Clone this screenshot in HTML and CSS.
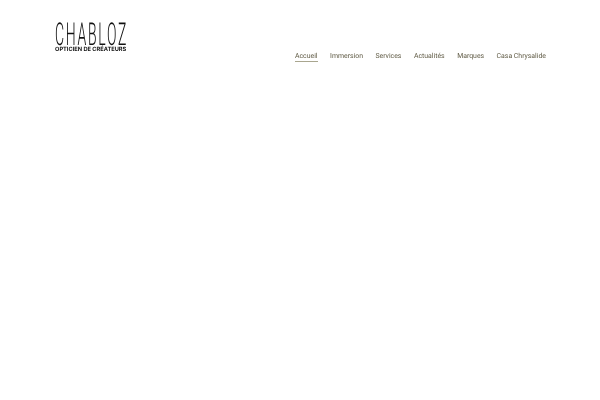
FILE: index.html
```html
<!DOCTYPE html>
<html lang="fr">
<head>
<meta charset="utf-8">
<title>Chabloz</title>
<link rel="stylesheet" href="styles.css">
</head>
<body>
<header class="site-header">
  <a class="logo" href="#">
    <span class="logo-name">CHABLOZ</span>
    <span class="logo-tag">OPTICIEN DE CRÉATEURS</span>
  </a>
  <nav class="main-nav">
    <a class="nav-link active" href="#">Accueil</a>
    <a class="nav-link" href="#">Immersion</a>
    <a class="nav-link" href="#">Services</a>
    <a class="nav-link" href="#">Actualités</a>
    <a class="nav-link" href="#">Marques</a>
    <a class="nav-link" href="#">Casa Chrysalide</a>
  </nav>
</header>
</body>
</html>
```
FILE: styles.css
```css
html, body {
  margin: 0;
  padding: 0;
  background: #fff;
  height: 100%;
  overflow: hidden;
}
.site-header {
  display: flex;
  justify-content: space-between;
  align-items: flex-start;
  padding: 25px 54px 0 55px;
  text-rendering: geometricPrecision;
}
a {
  text-decoration: none;
}
.logo {
  display: flex;
  flex-direction: column;
  width: 73px;
  color: #111;
  filter: blur(0.2px);
}
.logo-name {
  display: block;
  height: 10px;
  margin: 0 0 11.5px;
  font: 300 14px/10px "Roboto", sans-serif;
  letter-spacing: 1.7px;
  white-space: nowrap;
  transform: scale(1, 2.25);
  transform-origin: 0 0;
}
.logo-tag {
  display: block;
  font: 700 5.7px/6px "Inter", sans-serif;
  white-space: nowrap;
}
.main-nav {
  display: flex;
  gap: 12.5px;
  margin-top: 26px;
  filter: blur(0.2px);
}
.nav-link {
  font: 400 6.9px/10px "Roboto", sans-serif;
  color: #5f5a44;
  border-bottom: 1px solid transparent;
}
.nav-link.active {
  border-bottom-color: #a9a68f;
}
```
